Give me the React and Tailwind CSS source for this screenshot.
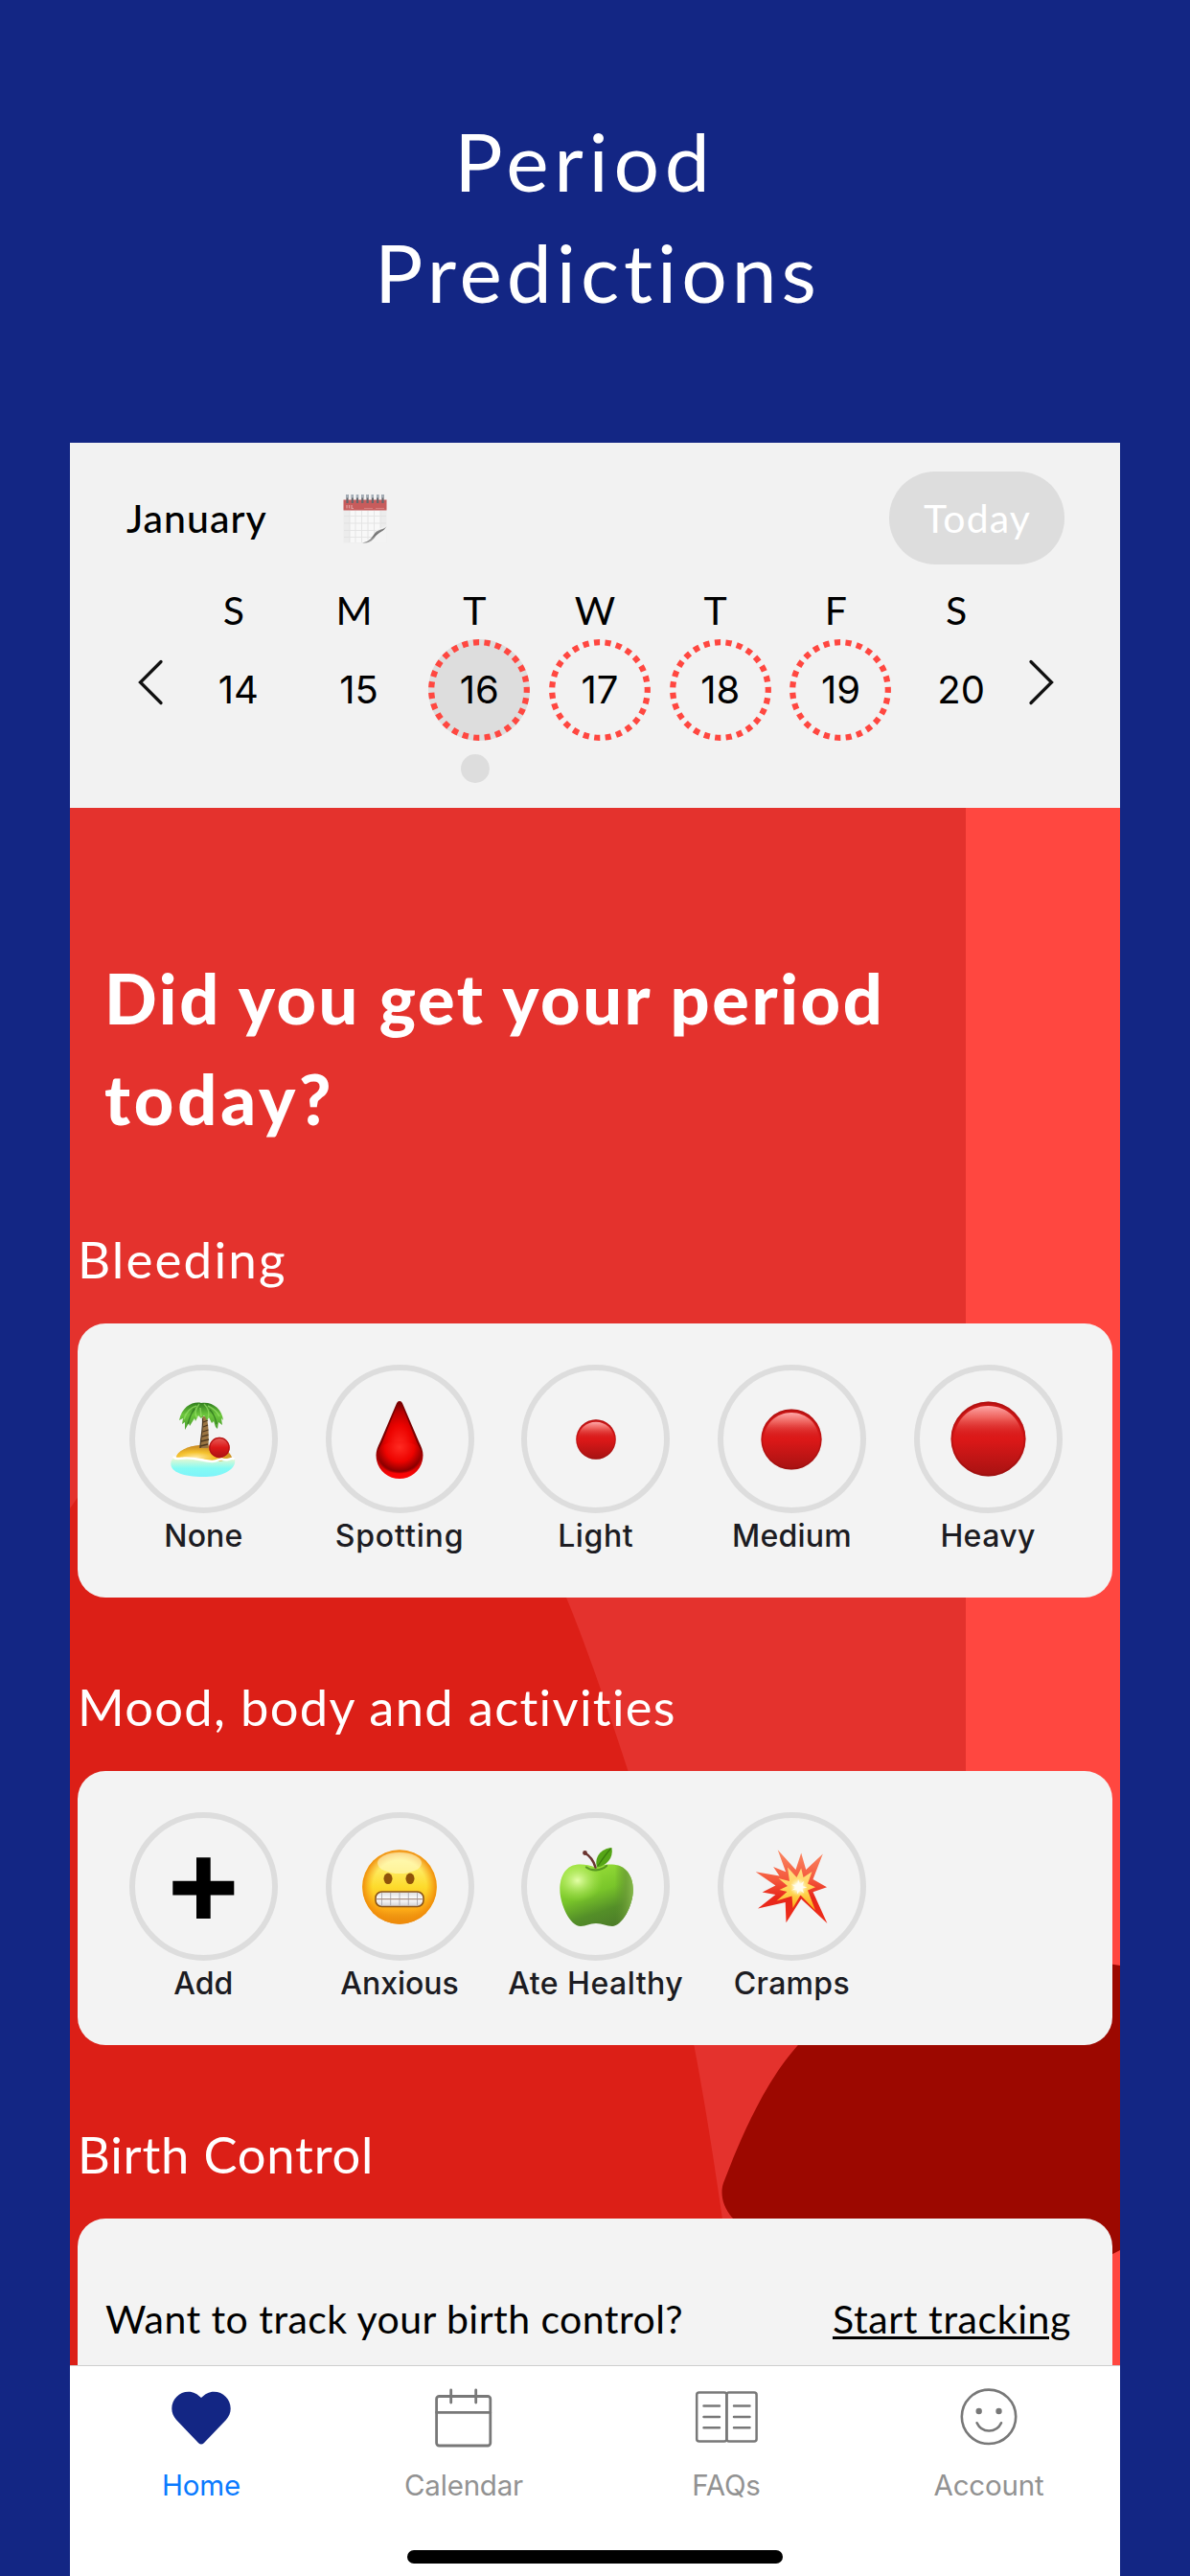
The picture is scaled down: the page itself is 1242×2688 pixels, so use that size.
import React from 'react';

const weekdays = ['S', 'M', 'T', 'W', 'T', 'F', 'S'];

const dates = [
  { day: 14 },
  { day: 15 },
  { day: 16, predicted: true, selected: true },
  { day: 17, predicted: true },
  { day: 18, predicted: true },
  { day: 19, predicted: true },
  { day: 20 },
];

const CalendarEmoji = () => (
  <svg className="w-[46px] h-[52px]" viewBox="0 0 46 52">
    <defs>
      <linearGradient id="curl" x1="0.3" y1="0.2" x2="0.8" y2="0.8">
        <stop offset="0" stopColor="#f4f4f4" />
        <stop offset="0.5" stopColor="#6f6f6f" />
        <stop offset="1" stopColor="#e9e9e9" />
      </linearGradient>
    </defs>
    <rect x="0.5" y="7" width="45" height="44.5" fill="#ececec" />
    <rect x="7" y="18" width="32" height="33" fill="#f8f8f8" />
    <path d="M7 18v33M13 18v33M19.500 18v33M26 18v30M32.500 18v24M39 18v20M1 23.500h44M1 31h44M1 38.500h36M1 45.500h30" stroke="#e2e2e2" strokeWidth="0.9" />
    <rect x="0.5" y="6.500" width="45" height="11" fill="#c75c5c" />
    <path d="M4 12v3.500M6.500 12v3.500M9 12v3.500h2" stroke="#dfa0a0" strokeWidth="1.200" fill="none" />
    <path d="M22 15.500h9M34 15.500h9" stroke="#d98080" strokeWidth="1.200" />
    <path d="M4.500 1v9M9.800 1v9M15 1v9M20.300 1v9M25.600 1v9M30.900 1v9M36.200 1v9M41.500 1v9" stroke="#66666c" strokeWidth="2.200" />
    <path d="M4.500 1v3.500M9.800 1v3.500M15 1v3.500M20.300 1v3.500M25.600 1v3.500M30.900 1v3.500M36.200 1v3.500M41.500 1v3.500" stroke="#a5b0ba" strokeWidth="2.200" />
    <path d="M45.500 33v18.500H22C29 50 31 43 34 39c3-3 8-3 11.500-6Z" fill="#f3f3f3" />
    <path d="M45.500 34C43 38 36 37 33 41.500 30 46 28 50 20 51.500c9 .5 11-3 14-7 3-4 9-5 11.500-10.500Z" fill="url(#curl)" />
  </svg>
);

const Ball = ({ size, id }) => (
  <svg className="overflow-visible" width={size} height={size} viewBox="0 0 80 80">
    <defs>
      <linearGradient id={`${id}-body`} x1="0" y1="0" x2="0" y2="1">
        <stop offset="0" stopColor="#c41414" />
        <stop offset="0.5" stopColor="#dc1818" />
        <stop offset="1" stopColor="#a61212" />
      </linearGradient>
      <linearGradient id={`${id}-shine`} x1="0" y1="0" x2="0" y2="1">
        <stop offset="0" stopColor="#ffaaaa" />
        <stop offset="0.35" stopColor="#f4706a" stopOpacity="0.85" />
        <stop offset="1" stopColor="#dc1818" stopOpacity="0" />
      </linearGradient>
    </defs>
    <circle cx="40" cy="40" r="39.500" fill={`url(#${id}-body)`} />
    <path d="M4 41C4 20 20 5 40 5s36 15 36 36Z" fill={`url(#${id}-shine)`} />
    <circle cx="40" cy="40" r="38.500" fill="none" stroke="#8e0c0c" strokeOpacity="0.35" strokeWidth="2" />
  </svg>
);

const Island = () => (
  <svg className="w-20 h-[84px]" viewBox="0 0 80 84">
    <defs>
      <linearGradient id="sea" x1="0" y1="0" x2="0" y2="1">
        <stop offset="0" stopColor="#eef7cf" />
        <stop offset="0.55" stopColor="#84fbf4" />
        <stop offset="1" stopColor="#7df3fa" />
      </linearGradient>
      <radialGradient id="sand" cx="0.35" cy="0.75" r="0.7">
        <stop offset="0" stopColor="#ffe9a0" />
        <stop offset="0.45" stopColor="#f5c22e" />
        <stop offset="1" stopColor="#c98a22" />
      </radialGradient>
      <linearGradient id="leaf" x1="0" y1="0" x2="0" y2="1">
        <stop offset="0" stopColor="#2f7d1d" />
        <stop offset="0.45" stopColor="#6cc63c" />
        <stop offset="1" stopColor="#479b2d" />
      </linearGradient>
      <linearGradient id="island-ball" x1="0" y1="0" x2="0" y2="1">
        <stop offset="0" stopColor="#e8615c" />
        <stop offset="0.5" stopColor="#dc1818" />
        <stop offset="1" stopColor="#ab1313" />
      </linearGradient>
    </defs>
    <path d="M6.300 68C6 62 10 60 14 62c18-2 34 5 44 0 6 2 10-3 15 1 2 10-12 18-33 18S7 76 6.300 68Z" fill="url(#sea)" />
    <path d="M12 60C14 53 27 48 38 48c14 0 31 5 32 13 0 3-5 1-8 2.500C52 68 44 60 12 61Z" fill="url(#sand)" />
    <path d="M9.500 60.500c2 3 5 1 10 1 12-1 20 3 30 3.500 7 0 7-4 12-2 4 1.500 7-2 10-1" stroke="#fff" strokeWidth="2.400" fill="none" strokeLinecap="round" />
    <path d="M39 18C41 30 37 42 36.500 51h9C46 40 46 28 43.500 18Z" fill="#9a7442" />
    <path d="M40 24l5-2M40 29l5-2M39.500 34l6-2M38.500 39l7-2M38 44l8-2M37 49l8-2" stroke="#4d3820" strokeWidth="1.300" />
    <path d="M37 51C37 42 40 32 39.500 20" stroke="#4d3820" strokeWidth="1.200" fill="none" />
    <path d="M38 4C30 2 18 7 15 22l4-2-1 6 3-2 0 8 4-7 1 3 5-8 1 3 3-6 3 3 3-3 3 5 2-3 3 6 2-2 2 6 2 2 1-7 4 3-1-7 2 2C60 10 49 2 38 4Z" fill="url(#leaf)" />
    <path d="M36 5c-5 6-5 11-2 15M41 5c5 5 6 9 4 15M33 7C26 9 22 14 20 21M45 7c6 3 10 6 12 11M37 9l1 9" stroke="#9be36a" strokeOpacity="0.65" strokeWidth="1.500" fill="none" />
    <path d="M31 10c-3 4-5 8-7 16M47 11c4 4 6 9 7 15" stroke="#28691d" strokeOpacity="0.7" strokeWidth="1.300" fill="none" />
    <circle cx="57" cy="50.500" r="10.700" fill="url(#island-ball)" />
    <circle cx="57" cy="50.500" r="10.100" fill="none" stroke="#b51414" strokeWidth="1.200" />
  </svg>
);

const Drop = () => (
  <svg className="w-20 h-[84px]" viewBox="0 0 80 84">
    <defs>
      <radialGradient id="drop" gradientUnits="userSpaceOnUse" cx="0" cy="0" r="1" gradientTransform="translate(40 50) scale(26 46)">
        <stop offset="0" stopColor="#ff2b22" />
        <stop offset="0.5" stopColor="#ec0300" />
        <stop offset="0.8" stopColor="#b80000" />
        <stop offset="1" stopColor="#750000" />
      </radialGradient>
      <linearGradient id="drop-base" x1="0" y1="0" x2="0" y2="1">
        <stop offset="0.6" stopColor="#7c0000" />
        <stop offset="0.95" stopColor="#fa0505" />
      </linearGradient>
      <radialGradient id="drop-core" gradientUnits="userSpaceOnUse" cx="40" cy="50" r="28">
        <stop offset="0" stopColor="#ff2b22" />
        <stop offset="0.55" stopColor="#ed0300" />
        <stop offset="0.9" stopColor="#8a0000" />
        <stop offset="1" stopColor="#8a0000" stopOpacity="0" />
      </radialGradient>
    </defs>
    <path d="M40 2c2 0 3 2 4 4.500L60 44c3 6 4.500 10 4.500 14.500C64.500 73 53 83 40 83S15.500 73 15.500 58.500C15.500 54 17 50 20 44L36 6.500C37 4 38 2 40 2Z" fill="url(#drop-base)" />
    <path d="M40 4c2 0 2 2 3 4l15 37c3 6 5 9 5 13 0 12-11 19.500-23 19.500S17 70 17 58c0-4 2-7 5-13L37 8c1-2 1-4 3-4Z" fill="url(#drop)" />
    <path d="M18 56C18 40 62 40 62 56 62 70 52 77 40 77S18 70 18 56Z" fill="url(#drop-core)" />
  </svg>
);

const Plus = () => (
  <svg className="w-20 h-[84px]" viewBox="0 0 80 84">
    <path d="M33 11.300h14.700v24.500H72.300v14.800H47.700V75H33V50.600H8.300V35.800H33Z" fill="#000" />
  </svg>
);

const Grimace = () => (
  <svg className="w-20 h-[84px]" viewBox="0 0 80 84">
    <defs>
      <linearGradient id="face" x1="0" y1="0" x2="0" y2="1">
        <stop offset="0" stopColor="#fff6a8" />
        <stop offset="0.15" stopColor="#fff27a" />
        <stop offset="0.5" stopColor="#fddb2c" />
        <stop offset="0.8" stopColor="#fdab17" />
        <stop offset="1" stopColor="#dd7d0c" />
      </linearGradient>
      <radialGradient id="face-rim">
        <stop offset="0.72" stopColor="#f79a0f" stopOpacity="0" />
        <stop offset="1" stopColor="#f08c0a" />
      </radialGradient>
      <linearGradient id="teeth" x1="0" y1="0" x2="0" y2="1">
        <stop offset="0" stopColor="#dcdcdf" />
        <stop offset="0.5" stopColor="#fff" />
        <stop offset="1" stopColor="#cfcfd4" />
      </linearGradient>
    </defs>
    <circle cx="40" cy="42" r="38.800" fill="url(#face)" />
    <circle cx="40" cy="42" r="38.800" fill="url(#face-rim)" />
    <ellipse cx="40" cy="17" rx="23" ry="11" fill="#fffbd0" fillOpacity="0.55" />
    <ellipse cx="28" cy="33.300" rx="4.500" ry="5.800" fill="#90530a" />
    <ellipse cx="51" cy="33.300" rx="4.500" ry="5.800" fill="#90530a" />
    <rect x="15" y="47" width="50" height="15.500" rx="6.500" fill="url(#teeth)" stroke="#8a5418" strokeWidth="1.600" />
    <path d="M21.500 48v13.500M30.700 48v13.500M40 48v13.500M49.300 48v13.500M58.500 48v13.500" stroke="#a9a9b0" strokeWidth="0.900" />
    <path d="M16 54.700h48" stroke="#a88f82" strokeWidth="1.300" />
  </svg>
);

const Apple = () => (
  <svg className="w-20 h-[84px]" viewBox="0 0 80 84">
    <defs>
      <linearGradient id="apple" x1="0.3" y1="0" x2="0.7" y2="1">
        <stop offset="0" stopColor="#9be13a" />
        <stop offset="0.45" stopColor="#79c52a" />
        <stop offset="0.75" stopColor="#548f28" />
        <stop offset="1" stopColor="#4d7d29" />
      </linearGradient>
      <radialGradient id="apple-shine" cx="0.24" cy="0.26" r="0.35">
        <stop offset="0" stopColor="#e4ffa8" />
        <stop offset="1" stopColor="#a4e64a" stopOpacity="0" />
      </radialGradient>
      <linearGradient id="apple-edge" x1="0" y1="0" x2="1" y2="0">
        <stop offset="0.75" stopColor="#5b8f2c" stopOpacity="0" />
        <stop offset="0.9" stopColor="#6c9d37" stopOpacity="0.8" />
        <stop offset="1" stopColor="#85b84a" />
      </linearGradient>
    </defs>
    <path d="M40 22C47 18 52 18.300 57 18.500 71 19 78.800 30 78.800 45 78.800 62 67 83 57 83c-6 0-10-3-17-3s-10 3-16 3C13 83 2.400 60 2.400 45 2.400 30 9 19 22 18.500c6-.2 11 .5 18 3.500Z" fill="url(#apple)" />
    <path d="M40 22C47 18 52 18.300 57 18.500 71 19 78.800 30 78.800 45 78.800 62 67 83 57 83c-6 0-10-3-17-3s-10 3-16 3C13 83 2.400 60 2.400 45 2.400 30 9 19 22 18.500c6-.2 11 .5 18 3.500Z" fill="url(#apple-edge)" />
    <path d="M40 22C47 18 52 18.300 57 18.500 71 19 78.800 30 78.800 45 78.800 62 67 83 57 83c-6 0-10-3-17-3s-10 3-16 3C13 83 2.400 60 2.400 45 2.400 30 9 19 22 18.500c6-.2 11 .5 18 3.500Z" fill="url(#apple-shine)" />
    <path d="M30 21.500c5 4 15 4 21-1.500" stroke="#3f7a17" strokeOpacity="0.7" strokeWidth="2.200" fill="none" strokeLinecap="round" />
    <path d="M28.500 6.500c5 3 9 8 11 15" stroke="#6a3430" strokeWidth="2.600" fill="none" strokeLinecap="round" />
    <circle cx="28.500" cy="6.500" r="2.400" fill="#6a3430" />
    <path d="M41 21.500C38 11 45 2 56.500 1 58.500 12 51 20 41 21.500Z" fill="#55a516" />
    <path d="M42 20C46 14 50 8 55.500 2" stroke="#3a7d0d" strokeWidth="1.300" fill="none" />
  </svg>
);

const Boom = () => (
  <svg className="w-20 h-[84px]" viewBox="0 0 80 84">
    <defs>
      <linearGradient id="boom" x1="0" y1="0" x2="0" y2="1">
        <stop offset="0" stopColor="#fb8a66" />
        <stop offset="0.4" stopColor="#f4583c" />
        <stop offset="0.65" stopColor="#e8261a" />
        <stop offset="1" stopColor="#ee2d1a" />
      </linearGradient>
      <linearGradient id="boom-inner" x1="0" y1="0" x2="0" y2="1">
        <stop offset="0" stopColor="#ffdd88" />
        <stop offset="0.6" stopColor="#ffd34e" />
        <stop offset="1" stopColor="#fba70f" />
      </linearGradient>
      <radialGradient id="boom-core">
        <stop offset="0" stopColor="#fff" />
        <stop offset="0.4" stopColor="#fffbe0" />
        <stop offset="1" stopColor="#ffe88a" stopOpacity="0" />
      </radialGradient>
    </defs>
    <path d="M25.700 3.300 44.500 24 50.200 6.600 55.200 24 72.800 7.600 62.500 34 77 42.300 62.500 47.300 77.400 80 50.200 54.500 34.500 79.300 33.700 58 5 64.600 23.400 50 9.600 47.600 23.400 40.600 2.700 26.300 27.500 30.600 21.100 21 34.100 26.300Z" fill="url(#boom)" />
    <path d="M36 21.500 45.500 32 50.200 22.500 52.500 32 61.500 26 57 38.500 65 42.300 57 45.500 65 66.500 49.500 50.500 41.500 64 40.500 51.500 24.500 56.500 35.500 47 27.500 45 36 41 26.500 33 38 36Z" fill="url(#boom-inner)" />
    <circle cx="47.500" cy="42" r="10" fill="url(#boom-core)" />
    <path d="M47 34l2 5 4-3-1.500 5 5 1.500-5 1 1.500 5-4-3-3 4v-5l-6 1 5-3-5-3 6 .5Z" fill="#fffdf0" />
  </svg>
);

const bleeding = [
  { label: 'None', spacing: 'tracking-[0.1px]', icon: <Island /> },
  { label: 'Spotting', spacing: 'tracking-[0.86px]', icon: <Drop /> },
  { label: 'Light', spacing: 'tracking-[0.6px]', icon: <Ball size={42} id="light" /> },
  { label: 'Medium', spacing: 'tracking-[0.2px]', icon: <Ball size={64} id="medium" /> },
  { label: 'Heavy', spacing: 'tracking-[0.4px]', icon: <Ball size={79} id="heavy" /> },
];

const moods = [
  { label: 'Add', spacing: 'tracking-normal', icon: <Plus /> },
  { label: 'Anxious', spacing: 'tracking-normal', icon: <Grimace /> },
  { label: 'Ate Healthy', spacing: 'tracking-[0.48px]', icon: <Apple /> },
  { label: 'Cramps', spacing: 'tracking-[0.3px]', icon: <Boom /> },
];

const DateCircle = ({ day, predicted, selected }) => (
  <div className="relative w-[106px] h-[106px] mx-auto flex items-center justify-center">
    {predicted && (
      <svg className="absolute inset-0 w-full h-full" viewBox="0 0 106 106">
        <circle cx="53" cy="53" r="53" fill={selected ? '#dddddd' : 'none'} />
        <circle
          cx="53"
          cy="53"
          r="49.800"
          fill="none"
          stroke="#ff4740"
          strokeWidth="6.200"
          pathLength="313.200"
          strokeDasharray="6.200 5.400"
          strokeDashoffset="6.100"
          transform="rotate(-90 53 53)"
        />
      </svg>
    )}
    <span className="relative font-['Inter'] text-[40px] leading-[48px] text-black">{day}</span>
  </div>
);

const Header = () => (
  <header className="h-[381px] bg-[#f2f2f2] pt-[30px]">
    <div className="flex items-center h-[97px] pl-[59px] pr-[58px]">
      <span className="w-[226px] font-medium text-[41px] tracking-[1px] text-black">January</span>
      <CalendarEmoji />
      <button className="ml-auto w-[183px] h-[97px] rounded-[48px] bg-[#dddddd] text-white text-[41px] tracking-[1.1px] pl-[1px]">
        Today
      </button>
    </div>

    <div className="grid grid-cols-7 w-[880px] ml-[108px] mt-[26px] text-center text-[41px] leading-[44px] text-black">
      {weekdays.map((d, i) => (
        <span key={i}>{d}</span>
      ))}
    </div>

    <div className="flex items-center pl-[70px] mt-[8px]">
      <svg className="w-7 h-12 -mt-4 mr-[15px]" viewBox="0 0 28 48">
        <path d="M25 2.500 3.500 24 25 45.500" fill="none" stroke="#111" strokeWidth="3.300" strokeLinecap="round" />
      </svg>
      <div className="grid grid-cols-7 w-[880px]">
        {dates.map((d) => (
          <DateCircle key={d.day} {...d} />
        ))}
      </div>
      <svg className="w-7 h-12 -mt-4 ml-[7px]" viewBox="0 0 28 48">
        <path d="M3 2.500 24.500 24 3 45.500" fill="none" stroke="#111" strokeWidth="3.300" strokeLinecap="round" />
      </svg>
    </div>

    {/* Today marker */}
    <div className="w-[30px] h-[30px] rounded-full bg-[#dddddd] ml-[408px] mt-[14px]" />
  </header>
);

const Backdrop = () => (
  <svg className="absolute inset-0 w-full h-full" viewBox="73 843 1096 1625" preserveAspectRatio="none">
    <rect x="73" y="843" width="1096" height="1625" fill="#e4322d" />
    <rect x="1008" y="843" width="161" height="1625" fill="#ff4740" />
    <path d="M73 1574C190 1400 460 1350 591 1667c10 24 19 48 29 76 14 40 24 70 35.500 105 27 90 51 190 69 287 11 58 20 115 29.500 181l20 152H73Z" fill="#dc1f17" />
    <path d="M1169 2051C1040 2030 920 2045 832 2135c-13 15-21 27-29 40-24 40-39 80-48 103-4 12 0 27 11 38 60 60 300 90 403 32Z" fill="#9c0800" />
  </svg>
);

const SectionTitle = ({ children, className }) => (
  <h2 className={`pl-2 h-[62px] mb-[36px] leading-[62px] whitespace-nowrap ${className}`}>{children}</h2>
);

const TrackerCard = ({ items }) => (
  <div className="flex h-[286px] mx-2 mb-[83px] pl-[29px] pt-[43px] rounded-[29px] bg-[#f3f3f3]">
    {items.map(({ label, spacing, icon }) => (
      <div key={label} className="w-[204.7px] flex flex-col items-center">
        <div className="w-[155px] h-[155px] rounded-full border-[6px] border-[#dddddd] flex items-center justify-center">
          {icon}
        </div>
        <span className={`mt-[5px] font-['Inter'] font-medium text-[32px] leading-[38px] whitespace-nowrap text-[#1c1c22] ${spacing}`}>
          {label}
        </span>
      </div>
    ))}
  </div>
);

const tabs = [
  {
    label: 'Home',
    active: true,
    icon: (
      <path
        d="M40 12C36 8 32 5.700 26.700 5.700 17 5.700 9.300 13.500 9.300 23.300c0 4.700 1.700 8.200 4.700 11.700L37.200 59.300q2.800 2.600 5.600 0L66 35c3-3.500 4.700-7 4.700-11.700C70.700 13.500 63 5.700 53.300 5.700 48 5.700 44 8 40 12Z"
        fill="#132684"
      />
    ),
  },
  {
    label: 'Calendar',
    icon: (
      <g fill="none" stroke="#787878" strokeWidth="2.800" strokeLinecap="round">
        <rect x="11.600" y="10.500" width="56.200" height="51.500" rx="2.800" />
        <path d="M11.600 27.300h56.200M26.700 4v13M52.700 4v13" />
      </g>
    ),
  },
  {
    label: 'FAQs',
    icon: (
      <g fill="none" stroke="#787878" strokeWidth="2.500" strokeLinecap="round">
        <rect x="9.200" y="6.500" width="31.200" height="51" rx="2.500" />
        <rect x="40.400" y="6.500" width="31.200" height="51" rx="2.500" />
        <path d="M16.500 20.400h16.500M16.500 31.900h16.500M16.500 43.300h16.500M48 20.400h16.500M48 31.900h16.500M48 43.300h16.500" />
      </g>
    ),
  },
  {
    label: 'Account',
    icon: (
      <g fill="none" stroke="#787878" strokeWidth="2.600" strokeLinecap="round">
        <circle cx="40" cy="31.800" r="28.200" />
        <path d="M27.600 38.300C30 43.500 35 46.500 40.200 46.500S50.600 43.500 53 38.300" />
        <circle cx="29.700" cy="26" r="3.200" fill="#787878" stroke="none" />
        <circle cx="50.500" cy="26" r="3.200" fill="#787878" stroke="none" />
      </g>
    ),
  },
];

const TabBar = () => (
  <nav className="h-[220px] bg-white border-t border-[#cfcfcf]">
    <div className="grid grid-cols-4 pt-[21px]">
      {tabs.map(({ label, active, icon }) => (
        <div key={label} className="flex flex-col items-center">
          <svg className="w-20 h-16" viewBox="0 0 80 64">{icon}</svg>
          <span className={`mt-[21px] font-['Inter'] text-[29.5px] leading-[36px] tracking-[-0.2px] ${active ? 'text-[#0a7aff]' : 'text-[#929292]'}`}>
            {label}
          </span>
        </div>
      ))}
    </div>
    {/* Home indicator */}
    <div className="w-[392px] h-[14px] mt-[50px] mx-auto rounded-full bg-black" />
  </nav>
);

export default function App() {
  return (
    <div className="w-[1242px] h-[2688px] overflow-hidden bg-[#132684] font-['Lato',sans-serif]">
      <h1 className="h-[462px] pt-[110px] pl-[6px] text-center text-white text-[84px] leading-[116px]">
        <span className="block whitespace-pre tracking-[5.7px]">{'Period '}</span>
        <span className="block tracking-[4.95px]">Predictions</span>
      </h1>

      <div className="w-[1096px] mx-[73px]">
        <Header />

        <main className="relative h-[1625px] overflow-hidden">
          <Backdrop />
          <div className="relative text-white">
            <h2 className="pt-[146px] pl-[36px] mb-[84px] font-black text-[72px] leading-[105px]">
              <span className="block tracking-[2.6px] whitespace-nowrap">Did you get your period</span>
              <span className="block tracking-[3.9px]">today?</span>
            </h2>

            <SectionTitle className="text-[53px] tracking-[2.1px]">Bleeding</SectionTitle>
            <TrackerCard items={bleeding} />

            <SectionTitle className="text-[52.5px] tracking-[1.3px]">Mood, body and activities</SectionTitle>
            <TrackerCard items={moods} />

            <SectionTitle className="text-[52.5px] tracking-[0.8px]">Birth Control</SectionTitle>
            <div className="flex justify-between items-start h-[286px] mx-2 pt-[80px] pl-[29px] pr-[43px] rounded-[29px] bg-[#f3f3f3] text-black text-[41px] leading-[50px] whitespace-nowrap">
              <span className="tracking-[0.45px]">Want to track your birth control?</span>
              <a className="tracking-[0.6px] underline decoration-[3px] underline-offset-[3px]">Start tracking</a>
            </div>
          </div>
        </main>

        <TabBar />
      </div>
    </div>
  );
}
